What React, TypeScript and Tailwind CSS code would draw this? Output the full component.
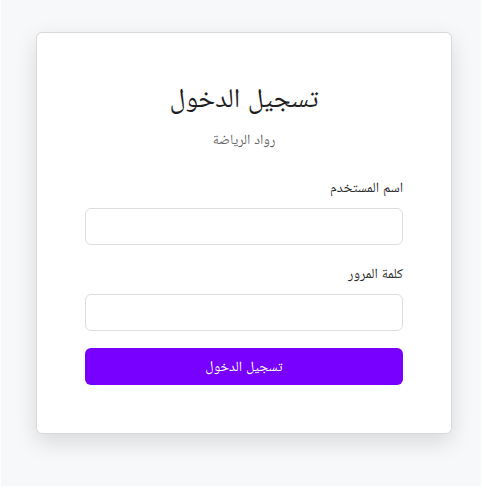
import React from "react";

export default function App() {
  return (
    <div className="w-[482px] h-[490px] bg-white" style={{ fontFamily: '"Liberation Sans", Arial, "Noto Naskh Arabic", "Noto Sans Arabic", "DejaVu Sans", sans-serif' }}>
      <div className="mx-px h-[486px] bg-[#f7f8fa] pt-[32px] pl-[35px]">
        <div
          dir="rtl"
          className="w-[416px] h-[402px] bg-white border border-[#d9d9d9] rounded-[6px] shadow-[0_8px_22px_rgba(0,0,0,0.13)] px-12 pt-12"
        >
          <h1 className="text-center text-[27px] leading-[34px] text-[#1f1f1f] font-normal">تسجيل الدخول</h1>
          <p className="text-center text-[14px] leading-[20px] text-[#666666] mt-[14px]">رواد الرياضة</p>
          <div className="mt-[28px]">
            <label className="block text-[14px] leading-[20px] text-[#2b2b2b] mb-[11px]">اسم المستخدم</label>
            <input
              type="text"
              className="block w-full h-[37px] border border-[#dddddd] rounded-[6px] bg-white outline-none"
            />
          </div>
          <div className="mt-[18px]">
            <label className="block text-[14px] leading-[20px] text-[#2b2b2b] mb-[11px]">كلمة المرور</label>
            <input
              type="password"
              className="block w-full h-[37px] border border-[#dddddd] rounded-[6px] bg-white outline-none"
            />
          </div>
          <button className="mt-[17px] w-full h-[37px] rounded-[6px] bg-[#7700ff] text-white text-[14px]">
            تسجيل الدخول
          </button>
        </div>
      </div>
    </div>
  );
}
